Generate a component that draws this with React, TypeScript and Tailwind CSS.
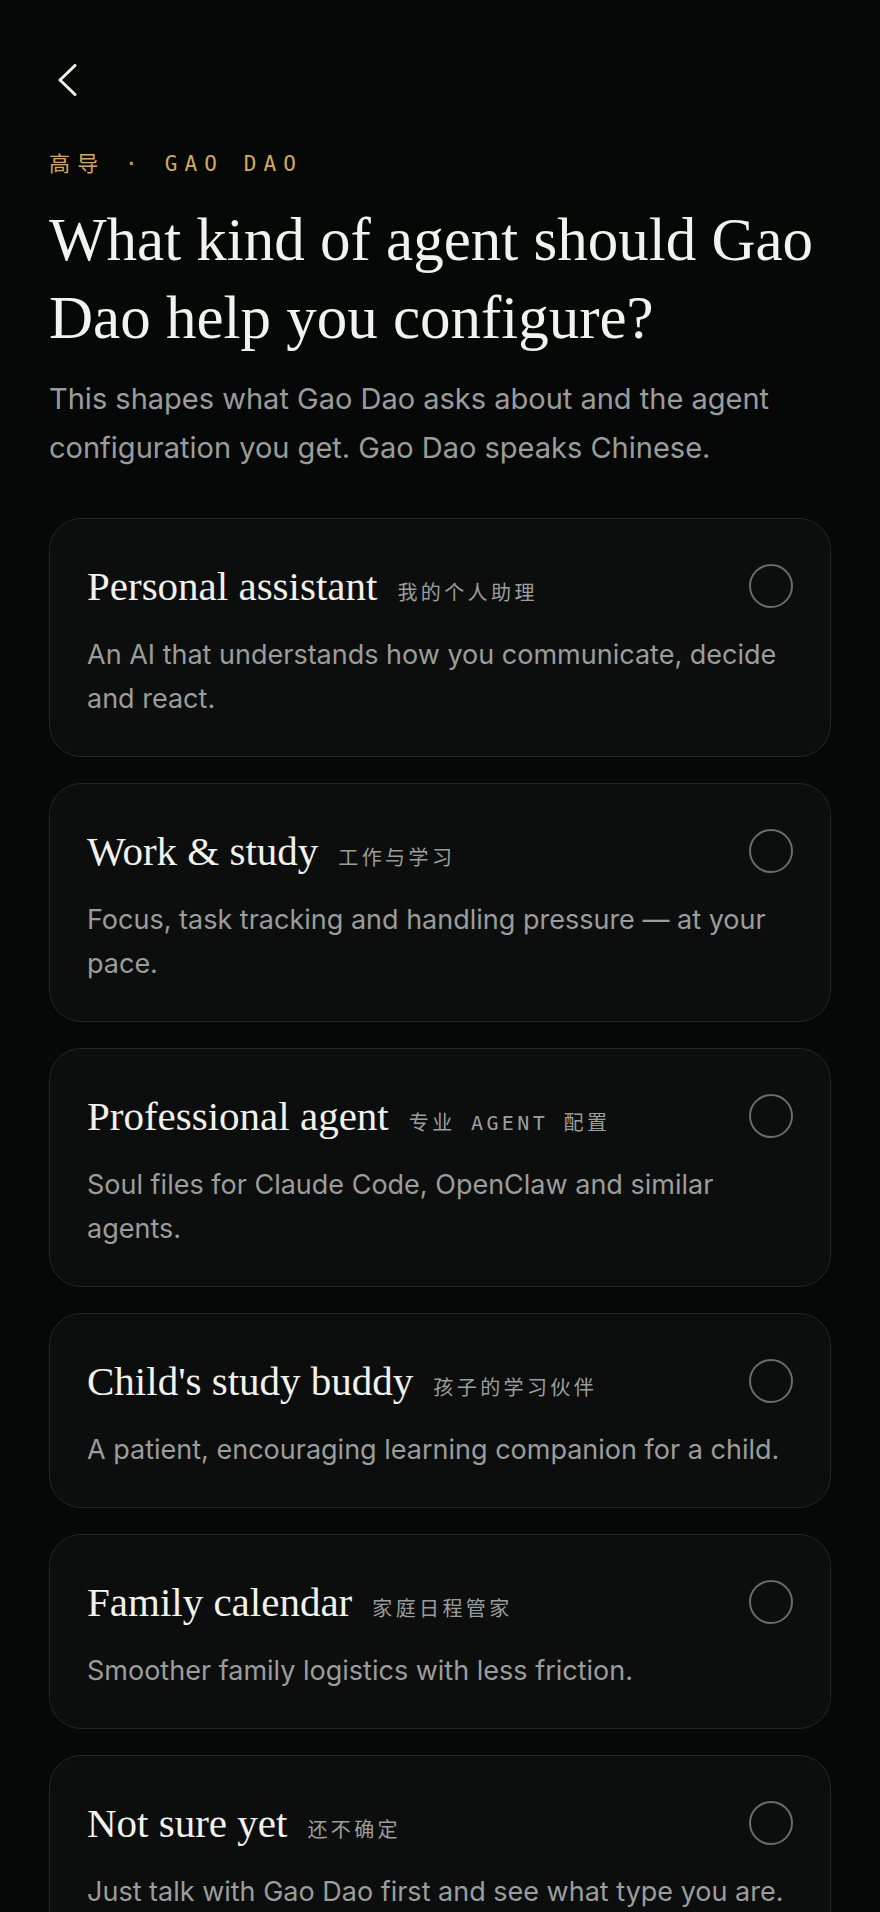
import React from "react";

const serif = { fontFamily: '"Liberation Serif", "Noto Sans CJK SC", serif' };

type Opt = { title: string; cn: string; desc: string };

const options: Opt[] = [
  { title: "Personal assistant", cn: "我的个人助理", desc: "An AI that understands how you communicate, decide and react." },
  { title: "Work & study", cn: "工作与学习", desc: "Focus, task tracking and handling pressure — at your pace." },
  { title: "Professional agent", cn: "专业 AGENT 配置", desc: "Soul files for Claude Code, OpenClaw and similar agents." },
  { title: "Child's study buddy", cn: "孩子的学习伙伴", desc: "A patient, encouraging learning companion for a child." },
  { title: "Family calendar", cn: "家庭日程管家", desc: "Smoother family logistics with less friction." },
  { title: "Not sure yet", cn: "还不确定", desc: "Just talk with Gao Dao first and see what type you are." },
];

function Card({ o }: { o: Opt }) {
  return (
    <button
      type="button"
      className="w-full text-left rounded-[32px] border border-[#232626] bg-[#0c0e0e] px-[37px] pt-[37px] pb-[35px]"
    >
      <div className="flex h-[60px] items-center justify-between">
        <div className="flex items-baseline">
          <span className="text-[41px] leading-[60px] text-[#f1f1ed]" style={serif}>
            {o.title}
          </span>
          <span className="ml-5 font-['DejaVu_Sans_Mono','Noto_Sans_CJK_SC',monospace] text-[20px] tracking-[0.17em] text-[#9c9e9d]">
            {o.cn}
          </span>
        </div>
        <span className="h-[44px] w-[44px] shrink-0 rounded-full border-2 border-[#6a6c6b]" />
      </div>
      <p className="mt-[17px] font-['Inter',sans-serif] text-[27px] leading-[44px] text-[#9a9d9b]">
        {o.desc}
      </p>
    </button>
  );
}

export default function App() {
  return (
    <div className="min-h-[1912px] w-full bg-[#060808] px-[49px] pt-[64px] pb-10">
      <svg width="22" height="32" viewBox="0 0 22 32" className="ml-[7px] block">
        <polyline points="19,1.5 4,16 19,30.5" fill="none" stroke="#f4f4f0" strokeWidth="3" strokeLinecap="round" strokeLinejoin="round" />
      </svg>
      <div className="mt-[54px] font-['DejaVu_Sans_Mono','Noto_Sans_CJK_SC',monospace] text-[21px] leading-[28px] tracking-[0.34em] text-[#d3aa56]">
        高导 · GAO DAO
      </div>
      <h1 className="mt-[23px] text-[61px] leading-[78px] font-normal text-[#f2f2ee]" style={serif}>
        What kind of agent should Gao Dao help you configure?
      </h1>
      <p className="mt-[17px] font-['Inter',sans-serif] text-[29px] leading-[49px] text-[#9a9d9b]">
        This shapes what Gao Dao asks about and the agent configuration you get. Gao Dao speaks Chinese.
      </p>
      <div className="mt-[46px] flex flex-col gap-[26px]">
        {options.map((o) => (
          <Card key={o.title} o={o} />
        ))}
      </div>
    </div>
  );
}
